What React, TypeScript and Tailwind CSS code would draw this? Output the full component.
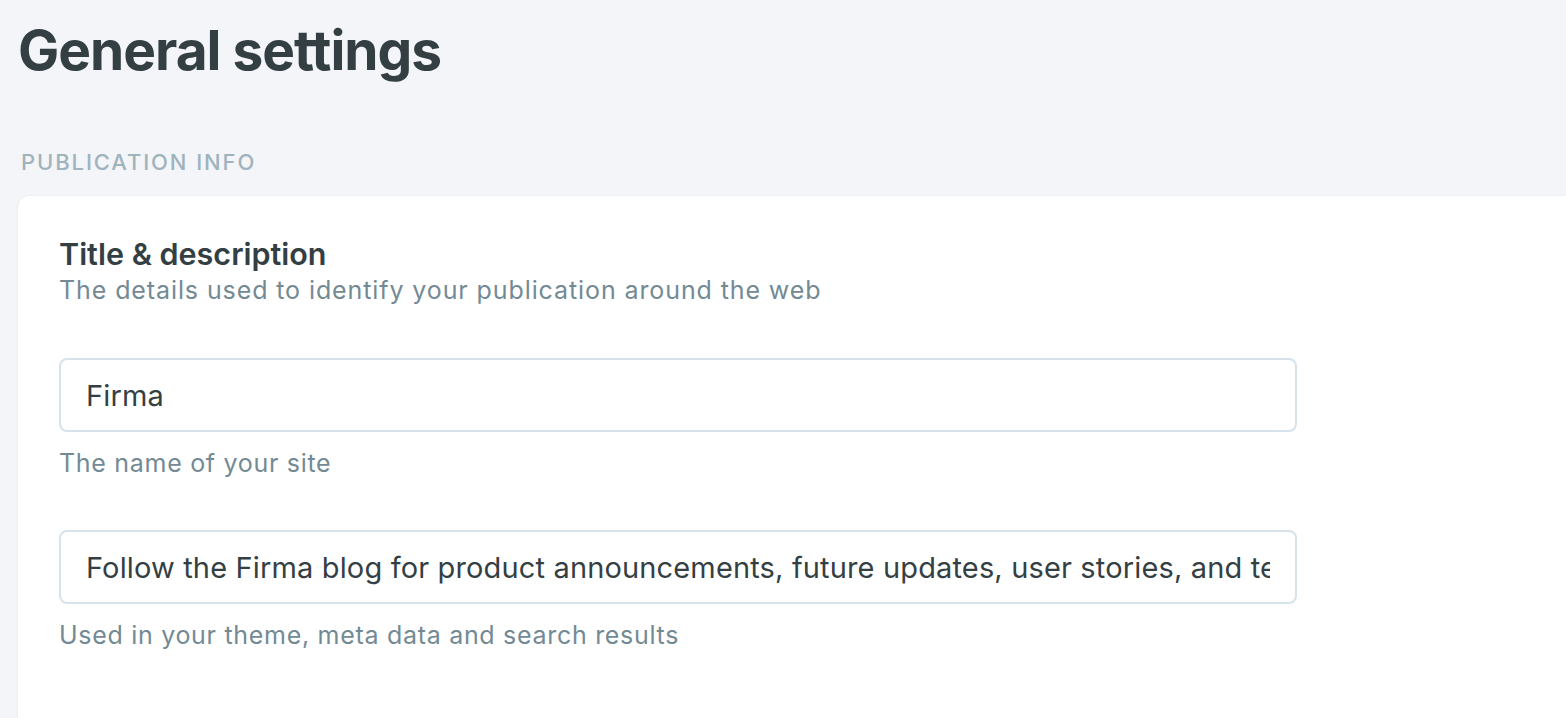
export default function App() {
  return (
    <div className="h-screen bg-[#f4f5f8] font-['Inter',sans-serif] overflow-hidden">
      {/* Header */}
      <h1 className="pl-[18px] pt-[18px] text-[55px] leading-[64px] font-bold tracking-[-1px] text-[#343f44]">
        General settings
      </h1>

      {/* Section label */}
      <div className="mt-[66px] pl-[21px] text-[22px] leading-[28px] tracking-[1.9px] text-[#9fb3bd] font-medium">
        PUBLICATION INFO
      </div>

      {/* Card */}
      <div className="mt-[20px] ml-[18px] bg-white rounded-tl-[10px] shadow-[0_0_1px_rgba(0,0,0,0.14),0_1px_3px_rgba(0,0,0,0.04)] pl-[41px] pt-[40px] h-full">
        <h2 className="text-[30.5px] leading-[36px] font-semibold text-[#343f44]">
          Title &amp; description
        </h2>
        <p className="mt-[1px] text-[25px] leading-[34px] tracking-[0.9px] text-[#738a94]">
          The details used to identify your publication around the web
        </p>

        <div className="mt-[51px] w-[1238px]">
          <input
            defaultValue="Firma"
            className="w-full h-[74px] px-[25px] rounded-[8px] border-2 border-[#d6e3eb] text-[29px] tracking-[0.15px] text-[#343f44] outline-none bg-white"
          />
          <p className="mt-[14px] text-[25px] leading-[34px] tracking-[0.7px] text-[#738a94]">
            The name of your site
          </p>
        </div>

        <div className="mt-[50px] w-[1238px]">
          <input
            defaultValue="Follow the Firma blog for product announcements, future updates, user stories, and tech insights."
            className="w-full h-[74px] px-[25px] rounded-[8px] border-2 border-[#d6e3eb] text-[29px] tracking-[0.15px] text-[#343f44] outline-none bg-white"
          />
          <p className="mt-[14px] text-[25px] leading-[34px] tracking-[0.7px] text-[#738a94]">
            Used in your theme, meta data and search results
          </p>
        </div>
      </div>
    </div>
  )
}
